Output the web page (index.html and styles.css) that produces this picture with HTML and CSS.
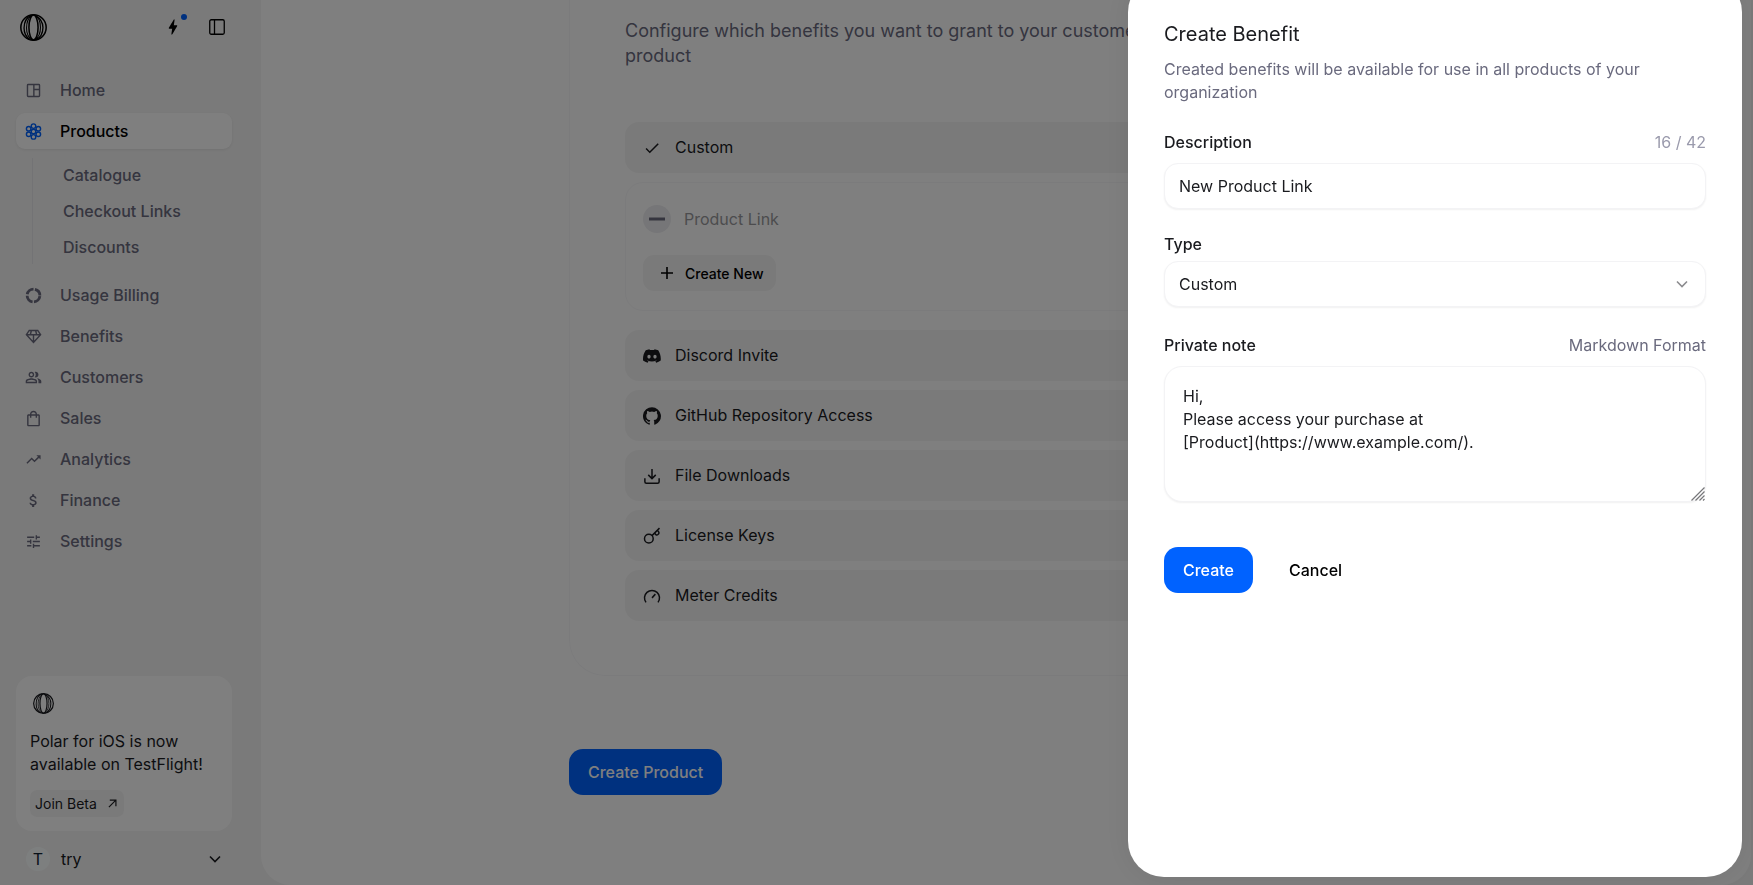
FILE: index.html
```html
<!DOCTYPE html>
<html lang="en">
<head>
<meta charset="utf-8">
<meta name="viewport" content="width=device-width, initial-scale=1">
<title>Create Product</title>
<link rel="stylesheet" href="styles.css">
</head>
<body>
<svg class="sprite" aria-hidden="true">
  <symbol id="logo" viewBox="0 0 26 26">
    <g fill="none" stroke="currentColor" stroke-width="1.500">
      <circle cx="13" cy="13" r="12.200"/>
      <ellipse cx="13" cy="13" rx="4.400" ry="12"/>
      <path d="M11 1C5.500 3.500 3.900 8.500 3.900 13.500c0 4 1.600 8.500 5.600 11M15 1.500c5 3 7.100 7 7.100 11.500s-1.600 9.500-7.100 12" stroke-width="1.300"/>
      <path d="M12 1C7.800 3.500 6.300 9 6.300 13.500S8 23 12 25M14 1c4.200 2 5.700 7.500 5.700 12s-1.500 9.500-5.700 12" stroke-width="1"/>
    </g>
  </symbol>
</svg>
<div class="app">
  <aside class="sidebar">
    <header class="brand">
      <svg class="brand-logo"><use href="#logo"/></svg>
      <div class="brand-actions">
        <button class="icon-button" type="button" aria-label="What's new">
          <svg width="22" height="22" viewBox="0 0 24 24" fill="currentColor"><path d="M11 21h-1l1-7H7.500c-.9 0-.6-.8-.3-1.300C8.500 10.400 10.500 7 13 3h1l-1 7h3.500c.5 0 .8.300.4 1.100C13.600 17 11 21 11 21z"/></svg>
          <span class="dot"></span>
        </button>
        <button class="icon-button" type="button" aria-label="Toggle sidebar">
          <svg width="18" height="18" viewBox="0 0 18 18" fill="none" stroke="currentColor" stroke-width="1.300"><rect x="1.750" y="1.750" width="14.500" height="14.500" rx="1.500"/><path d="M6.500 2v14"/></svg>
        </button>
      </div>
    </header>
    <nav class="nav">
      <a class="nav-item" href="#"><svg class="nav-icon line" viewBox="0 0 24 24"><rect x="3.500" y="3.500" width="17" height="17" rx="1"/><path d="M12.500 3.500v17M12.500 10.500h8"/></svg>Home</a>
      <a class="nav-item active" href="#"><svg class="nav-icon line" viewBox="0 0 24 24"><circle cx="12" cy="12" r="3.200"/><circle cx="12" cy="4.400" r="3.200"/><circle cx="12" cy="19.600" r="3.200"/><circle cx="5.200" cy="8.200" r="3.200"/><circle cx="18.800" cy="8.200" r="3.200"/><circle cx="5.200" cy="15.800" r="3.200"/><circle cx="18.800" cy="15.800" r="3.200"/></svg>Products</a>
      <div class="subnav">
        <a href="#">Catalogue</a>
        <a href="#">Checkout Links</a>
        <a href="#">Discounts</a>
      </div>
      <a class="nav-item" href="#"><svg class="nav-icon ring" viewBox="0 0 24 24"><circle cx="12" cy="12" r="9" stroke-dasharray="12.100 2.037" stroke-dashoffset="-1"/></svg>Usage Billing</a>
      <a class="nav-item" href="#"><svg class="nav-icon line" viewBox="0 0 24 24"><path d="M6 3.500h12l4 6-10 11L2 9.500zM2 9.500h20M9 3.500l-1.500 6M15 3.500l1.500 6M12 9.500v10"/></svg>Benefits</a>
      <a class="nav-item" href="#"><svg class="nav-icon" viewBox="0 0 24 24"><path d="M16.670 13.130C18.040 14.060 19 15.320 19 17v3h4v-3c0-2.180-3.570-3.470-6.330-3.870zM15 12c2.210 0 4-1.790 4-4s-1.790-4-4-4c-.47 0-.91.100-1.330.240a5.980 5.980 0 0 1 0 7.520c.42.140.86.240 1.330.240zM9 12c2.210 0 4-1.790 4-4s-1.790-4-4-4-4 1.790-4 4 1.790 4 4 4zm0-6c1.100 0 2 .9 2 2s-.9 2-2 2-2-.9-2-2 .9-2 2-2zM9 13c-2.670 0-8 1.340-8 4v3h16v-3c0-2.660-5.330-4-8-4zm6 5H3v-.99C3.200 16.290 6.300 15 9 15s5.800 1.290 6 2v1z"/></svg>Customers</a>
      <a class="nav-item" href="#"><svg class="nav-icon" viewBox="0 0 24 24"><path d="M19 6h-2c0-2.760-2.240-5-5-5S7 3.240 7 6H5c-1.100 0-2 .9-2 2v13c0 1.100.9 2 2 2h14c1.100 0 2-.9 2-2V8c0-1.100-.9-2-2-2zm-7-3c1.660 0 3 1.340 3 3H9c0-1.660 1.340-3 3-3zm7 18H5V8h2v3h2V8h6v3h2V8h2v13z"/></svg>Sales</a>
      <a class="nav-item" href="#"><svg class="nav-icon" viewBox="0 0 24 24"><path d="m16 6 2.290 2.290-4.880 4.880-4-4L2 16.590 3.410 18l6-6 4 4 6.300-6.290L22 12V6z"/></svg>Analytics</a>
      <a class="nav-item" href="#"><svg class="nav-icon" viewBox="0 0 24 24"><path d="M11.800 10.900c-2.270-.59-3-1.200-3-2.150 0-1.090 1.010-1.850 2.700-1.850 1.780 0 2.440.85 2.500 2.100h2.210c-.07-1.720-1.120-3.300-3.210-3.810V3h-3v2.160c-1.940.42-3.500 1.680-3.500 3.610 0 2.310 1.910 3.460 4.700 4.130 2.500.6 3 1.480 3 2.410 0 .69-.49 1.790-2.700 1.790-2.060 0-2.870-.92-2.980-2.100h-2.200c.12 2.190 1.760 3.420 3.680 3.830V21h3v-2.150c1.950-.37 3.500-1.500 3.500-3.550 0-2.840-2.430-3.810-4.700-4.400z"/></svg>Finance</a>
      <a class="nav-item" href="#"><svg class="nav-icon" viewBox="0 0 24 24"><path d="M3 17v2h6v-2H3zM3 5v2h10V5H3zm10 16v-2h8v-2h-8v-2h-2v6h2zM7 9v2H3v2h4v2h2V9H7zm14 4v-2H11v2h10zm-6-4h2V7h4V5h-4V3h-2v6z"/></svg>Settings</a>
    </nav>
    <section class="promo">
      <svg class="promo-logo"><use href="#logo"/></svg>
      <p>Polar for iOS is now available on TestFlight!</p>
      <a class="promo-link" href="#">Join Beta
        <svg width="9" height="9" viewBox="0 0 10 10" fill="none" stroke="currentColor" stroke-width="1.300"><path d="M1 9 8.700 1.300M2 1.200h6.800V8"/></svg>
      </a>
    </section>
    <button class="account" type="button">
      <span class="avatar">T</span>
      <span class="account-name">try</span>
      <svg width="14" height="14" viewBox="0 0 14 14" fill="none" stroke="currentColor" stroke-width="1.600"><path d="m2 4.500 5 5 5-5"/></svg>
    </button>
  </aside>
  <main class="main">
    <div class="content">
      <section class="card">
        <p class="lead">Configure which benefits you want to grant to your customers when they purchase the product</p>
        <div class="benefits">
          <button class="benefit" type="button"><svg class="benefit-icon" viewBox="0 0 24 24"><path d="M9 16.200 4.800 12l-1.400 1.400L9 19 21 7l-1.400-1.400z"/></svg>Custom</button>
          <div class="benefit-detail">
            <div class="benefit-empty"><span class="minus"><svg width="18" height="18" viewBox="0 0 18 18"><path d="M1 7.500h16v3H1z"/></svg></span>Product Link</div>
            <button class="create-new" type="button"><svg width="12" height="12" viewBox="0 0 12 12" fill="none" stroke="currentColor" stroke-width="1.600"><path d="M6 0v12M0 6h12"/></svg>Create New</button>
          </div>
          <button class="benefit" type="button"><svg class="benefit-icon" viewBox="0 0 24 24"><path d="M20.317 4.370a19.790 19.790 0 0 0-4.885-1.515.074.074 0 0 0-.079.037c-.211.375-.445.865-.608 1.250a18.270 18.270 0 0 0-5.487 0 12.640 12.640 0 0 0-.617-1.250.077.077 0 0 0-.079-.037A19.740 19.740 0 0 0 3.677 4.370C.533 9.046-.320 13.580.099 18.058c1.800 1.320 3.800 2.350 6.020 3.030.5-.6.900-1.300 1.226-1.994-.65-.250-1.270-.550-1.872-.892l.372-.292c3.928 1.793 8.180 1.793 12.062 0l.373.292c-.6.350-1.220.650-1.873.892.360.698.772 1.362 1.225 1.993 2.200-.680 4.200-1.700 6.002-3.030.5-5.177-.838-9.674-3.317-13.687zM8.020 15.330c-1.183 0-2.157-1.085-2.157-2.419s.955-2.419 2.157-2.419c1.210 0 2.176 1.096 2.157 2.420 0 1.333-.956 2.418-2.157 2.418zm7.975 0c-1.183 0-2.157-1.085-2.157-2.419s.955-2.419 2.157-2.419c1.210 0 2.176 1.096 2.157 2.420 0 1.333-.946 2.418-2.157 2.418z"/></svg>Discord Invite</button>
          <button class="benefit" type="button"><svg class="benefit-icon" viewBox="0 0 24 24"><path d="M12 .297a12 12 0 0 0-3.790 23.390c.6.113.820-.258.820-.577v-2.040c-3.338.724-4.042-1.610-4.042-1.610C4.422 18.070 3.633 17.700 3.633 17.700c-1.087-.744.084-.729.084-.729 1.205.084 1.838 1.236 1.838 1.236 1.070 1.835 2.809 1.305 3.495.998.108-.776.417-1.305.760-1.605-2.665-.3-5.466-1.332-5.466-5.930 0-1.310.465-2.380 1.235-3.220-.135-.303-.540-1.523.105-3.176 0 0 1.005-.322 3.300 1.230a11.500 11.500 0 0 1 6 0c2.280-1.552 3.285-1.230 3.285-1.230.645 1.653.240 2.873.120 3.176.765.840 1.230 1.910 1.230 3.220 0 4.610-2.805 5.625-5.475 5.920.420.360.810 1.096.810 2.220v3.286c0 .315.210.690.825.570A12 12 0 0 0 12 .297"/></svg>GitHub Repository Access</button>
          <button class="benefit" type="button"><svg class="benefit-icon line" viewBox="0 0 24 24"><path d="M12 2.500V15M7 10.500l5 5 5-5M2.500 15v4.500a2 2 0 0 0 2 2h15a2 2 0 0 0 2-2V15"/></svg>File Downloads</button>
          <button class="benefit" type="button"><svg class="benefit-icon line" viewBox="0 0 24 24"><circle cx="7.800" cy="15.500" r="5.800"/><path d="M12 11.500 22 1.500M16 7.500c-.5 2 2 4 4 2.500s1.500-3.500-.5-5"/></svg>License Keys</button>
          <button class="benefit" type="button"><svg class="benefit-icon line" viewBox="0 0 24 24"><path d="M4 20.500a10 10 0 1 1 16 0M12 14.500l4.500-5"/></svg>Meter Credits</button>
        </div>
      </section>
      <button class="primary" type="button">Create Product</button>
    </div>
  </main>
</div>
<div class="backdrop">
  <section class="drawer" role="dialog" aria-modal="true" aria-labelledby="drawer-title">
    <h2 id="drawer-title">Create Benefit</h2>
    <p class="drawer-intro">Created benefits will be available for use in all products of your organization</p>
    <form class="form">
      <div class="field">
        <div class="field-head"><label for="description">Description</label><span class="counter">16 / 42</span></div>
        <input class="control" id="description" type="text" value="New Product Link">
      </div>
      <div class="field field-tight">
        <div class="field-head"><label for="type">Type</label></div>
        <div class="control-wrap">
          <select class="control" id="type"><option>Custom</option></select>
          <svg class="chevron" width="12" height="12" viewBox="0 0 12 12" fill="none" stroke="currentColor" stroke-width="1.600"><path d="m1 3.500 5 5 5-5"/></svg>
        </div>
      </div>
      <div class="field">
        <div class="field-head"><label for="note">Private note</label><span class="hint">Markdown Format</span></div>
        <div class="control-wrap">
          <textarea class="control note" id="note" spellcheck="false">Hi,
Please access your purchase at
[Product](https://www.example.com/).</textarea>
          <svg class="grip" width="14" height="14" viewBox="0 0 14 14" fill="none" stroke="currentColor" stroke-width="1.200"><path d="M.5 13.500l13-13M4.500 13.500l9-9M8.500 13.500l5-5M12 13.500l1.500-1.500"/></svg>
        </div>
      </div>
      <div class="actions">
        <button class="primary" type="submit">Create</button>
        <button class="ghost" type="button">Cancel</button>
      </div>
    </form>
  </section>
</div>
</body>
</html>
```
FILE: styles.css
```css
* {
  box-sizing: border-box;
}

body {
  margin: 0;
  font-family: Inter, "Liberation Sans", sans-serif;
  font-size: 16px;
  line-height: 23px;
  color: #1a1b1f;
  background: #f5f5f5;
}

button,
input,
select,
textarea {
  font: inherit;
  color: inherit;
}

button {
  border: 0;
  background: none;
  padding: 0;
}

a {
  color: inherit;
  text-decoration: none;
}

h2,
p {
  margin: 0;
}

.sprite {
  display: none;
}

.app {
  display: flex;
  height: 100vh;
  overflow: hidden;
}

/* Sidebar */
.sidebar {
  display: flex;
  flex-direction: column;
  flex: 0 0 261px;
  padding: 13px 29px 13px 16px;
}

.brand {
  display: flex;
  align-items: center;
  justify-content: space-between;
  padding: 0 5px 0 4px;
  height: 28px;
}

.brand-logo {
  width: 27px;
  height: 27px;
  color: #000;
}

.brand-actions {
  display: flex;
  gap: 24px;
}

.icon-button {
  position: relative;
  display: flex;
  align-items: center;
  justify-content: center;
  width: 20px;
  height: 20px;
  color: #000;
}

.dot {
  position: absolute;
  top: -3px;
  right: -4px;
  width: 6px;
  height: 6px;
  border-radius: 50%;
  background: #0062ff;
}

.nav {
  display: flex;
  flex-direction: column;
  gap: 5px;
  margin-top: 31px;
  font-weight: 500;
  color: #6a6a7e;
}

.nav-item {
  display: flex;
  align-items: center;
  gap: 18px;
  height: 36px;
  padding: 0 9px;
  border-radius: 9px;
}

.nav-item.active {
  background: #fff;
  color: #000;
  box-shadow: 0 1px 3px rgba(0, 0, 0, 0.08);
}

.nav-icon {
  width: 17px;
  height: 17px;
  fill: currentColor;
}

.active .nav-icon {
  color: #0062ff;
}

.nav-icon.line,
.nav-icon.ring,
.benefit-icon.line {
  fill: none;
  stroke: currentColor;
  stroke-width: 2;
}

.nav-icon.ring {
  stroke-width: 4;
}

.subnav {
  display: flex;
  flex-direction: column;
  gap: 13px;
  margin: 4px 0 8px 16px;
  padding: 6px 0 5px 30px;
  border-left: 1px solid #e6e6ea;
}

.promo {
  display: flex;
  flex-direction: column;
  align-items: flex-start;
  margin-top: auto;
  padding: 17px 13px 14px 14px;
  border-radius: 16px;
  background: #fff;
}

.promo-logo {
  width: 21px;
  height: 21px;
  margin-left: 3px;
}

.promo p {
  margin-top: 16px;
}

.promo-link {
  display: flex;
  align-items: center;
  gap: 11px;
  height: 27px;
  margin-top: 14px;
  padding: 0 7px 0 5px;
  border-radius: 7px;
  background: #f5f5f5;
  font-size: 14px;
}

.account {
  display: flex;
  align-items: center;
  gap: 11px;
  height: 26px;
  margin-top: 15px;
  padding: 0 10px;
  text-align: left;
}

.avatar {
  width: 24px;
  height: 24px;
  border-radius: 50%;
  background: #fbffff;
  color: #123;
  line-height: 24px;
  text-align: center;
}

.account-name {
  flex: 1;
}

/* Main panel */
.main {
  flex: 1;
  margin-right: 2px;
  border-radius: 0 0 30px 30px;
  background: #fff;
}

.content {
  display: flex;
  flex-direction: column;
  align-items: flex-start;
  max-width: 874px;
  margin: 0 auto;
}

.card {
  width: 100%;
  padding: 18px 55px 54px;
  border: 1px solid #f7f7f9;
  border-top: 0;
  border-radius: 0 0 36px 36px;
}

.lead {
  font-size: 18px;
  line-height: 25px;
  color: #6a6a7e;
}

.benefits {
  display: flex;
  flex-direction: column;
  gap: 9px;
  margin-top: 54px;
}

.benefit {
  display: flex;
  align-items: center;
  gap: 14px;
  height: 51px;
  padding: 0 18px;
  border-radius: 14px;
  background: #f5f5f5;
}

.benefit-icon {
  width: 18px;
  height: 18px;
  fill: currentColor;
}

.benefit-detail {
  display: flex;
  flex-direction: column;
  align-items: flex-start;
  gap: 22px;
  margin-bottom: 10px;
  padding: 22px 17px 19px;
  border: 1px solid #f7f7f9;
  border-radius: 18px;
}

.benefit-empty {
  display: flex;
  align-items: center;
  gap: 13px;
  color: #99999c;
}

.minus {
  display: flex;
  align-items: center;
  justify-content: center;
  width: 28px;
  height: 28px;
  border-radius: 50%;
  background: #ededf0;
  fill: #6a6a7e;
}

.create-new {
  display: flex;
  align-items: center;
  gap: 12px;
  height: 36px;
  padding: 0 12px 0 18px;
  border-radius: 11px;
  background: #f5f5f5;
  color: #000;
  font-size: 14px;
  font-weight: 500;
}

.primary {
  height: 46px;
  padding: 0 19px;
  border-radius: 14px;
  background: #0062ff;
  color: #fff;
  font-weight: 500;
}

.content .primary {
  margin-top: 73px;
}

/* Drawer */
.backdrop {
  position: fixed;
  inset: 0;
  display: flex;
  justify-content: flex-end;
  padding: 0 11px 8px 0;
  background: rgba(0, 0, 0, 0.5);
}

.drawer {
  flex: 0 1 614px;
  margin-top: -24px;
  padding: 46px 36px 36px;
  border-radius: 36px;
  background: #fff;
  box-shadow: 0 0 30px rgba(0, 0, 0, 0.08);
}

.drawer h2 {
  font-size: 20px;
  font-weight: 400;
  line-height: 24px;
}

.drawer-intro {
  margin-top: 12px;
  color: #6a6a7e;
}

.form {
  display: flex;
  flex-direction: column;
  gap: 24px;
  margin-top: 27px;
}

.field {
  display: flex;
  flex-direction: column;
  gap: 9px;
}

.field-tight {
  gap: 5px;
  margin-bottom: 3px;
}

.field-head {
  display: flex;
  justify-content: space-between;
}

.field label {
  font-weight: 500;
}

.counter {
  color: #9a9aac;
}

.hint {
  color: #6a6a7e;
}

.control {
  width: 100%;
  height: 46px;
  padding: 0 14px;
  border: 1px solid #f3f3f5;
  border-radius: 14px;
  background: #fff;
  box-shadow: 0 1px 2px rgba(0, 0, 0, 0.06);
  outline: 0;
}

.control-wrap {
  position: relative;
  display: flex;
}

select.control {
  appearance: none;
}

.chevron {
  position: absolute;
  top: 17px;
  right: 18px;
  color: #8c8c8f;
  pointer-events: none;
}

.note {
  height: 136px;
  padding: 18px;
  border-radius: 18px;
  resize: none;
}

.grip {
  position: absolute;
  right: 1px;
  bottom: 1px;
  color: #77777a;
  pointer-events: none;
}

.actions {
  display: flex;
  gap: 18px;
  margin-top: 21px;
}

.ghost {
  height: 46px;
  padding: 0 18px;
  color: #000;
  font-weight: 500;
}
```
